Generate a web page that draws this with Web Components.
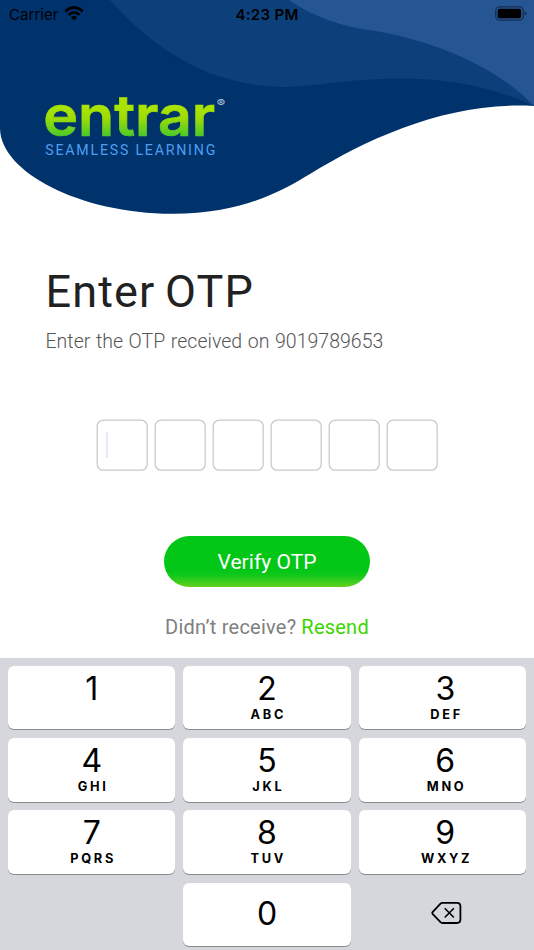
<!DOCTYPE html>
<html lang="en"><head><meta charset="utf-8"><title>Enter OTP</title>
<style>html,body{margin:0;background:#fff}body{width:534px;height:950px;overflow:hidden}</style></head>
<body><otp-screen></otp-screen>
<script>
const define = (name, html, setup) => customElements.define(name, class extends HTMLElement {
  connectedCallback() {
    if (this.shadowRoot) return;
    const t = document.createElement('template');
    t.innerHTML = html;
    this.attachShadow({ mode: 'open' }).append(t.content.cloneNode(true));
    if (setup) setup(this, this.shadowRoot);
  }
});

define('status-bar', `<style>
:host{display:grid;grid-template-columns:1fr auto 1fr;align-items:center;height:28px;padding:0 9px 0 9px;box-sizing:border-box;font:15px Inter,sans-serif;color:#000}
.l{display:flex;align-items:center;gap:5px;letter-spacing:.05px}
b{font-weight:600;letter-spacing:.3px}
.r{justify-self:end;display:flex;margin:-2px -2px 0 0}
svg{display:block}
.w{margin-top:-2px}
</style>
<div class="l"><span>Carrier</span><svg class="w" width="20" height="15" viewBox="0 0 20 15" fill="none" stroke="#000" stroke-width="2.7"><path d="M1.3 5.6Q10-2.7 18.7 5.6M4.6 8.9Q10 3.7 15.4 8.9"/><path d="M6.9 11.3Q10 8.7 13.1 11.3L10 14.4Z" fill="#000" stroke="none"/></svg></div>
<b>4:23 PM</b>
<div class="r"><svg width="32" height="15" viewBox="0 0 32 15"><rect x=".8" y=".9" width="27.4" height="13.2" rx="3.8" fill="none" stroke="#000" stroke-opacity=".45" stroke-width="1.3"/><rect x="2.7" y="2.8" width="23.4" height="9.4" rx="2" fill="#000"/><path d="M29.8 5.2Q31.5 6 31.5 7.5T29.8 9.8Z" fill="#000" opacity=".5"/></svg></div>`);

define('brand-logo', `<style>:host{display:block}svg{display:block;overflow:visible}</style>
<svg width="200" height="70" viewBox="0 0 200 70">
<defs><linearGradient id="g" gradientUnits="userSpaceOnUse" x1="0" y1="18" x2="0" y2="47"><stop offset="0" stop-color="#a9e400"/><stop offset=".35" stop-color="#9ddc06"/><stop offset="1" stop-color="#47c72c"/></linearGradient></defs>
<text x="3.2" y="46" font-family="Inter,sans-serif" font-weight="600" font-size="56.5" fill="url(#g)" stroke="url(#g)" stroke-width=".7" textLength="172" lengthAdjust="spacingAndGlyphs">entrar</text>
<text x="176.8" y="17" font-family="Inter,sans-serif" font-size="10.5" fill="#b7c9e4" textLength="8.4" lengthAdjust="spacingAndGlyphs">®</text>
<text x="5.3" y="65.1" font-family="Roboto,sans-serif" font-size="14.2" fill="#4e9ff0" textLength="170">SEAMLESS LEARNING</text>
</svg>`);

define('wave-header', `<style>
:host{display:grid;height:216px}
:host>*{grid-area:1/1}
svg{display:block}
.c{display:flex;flex-direction:column}
brand-logo{margin:62px 0 0 40px}
</style>
<svg width="534" height="216" viewBox="0 0 534 216">
<path fill="#00326c" d="M0 0H534V106C450 101 370 137 310 174C285 189 244 214 172 213.8C80 213.5 0 172 0 128Z"/>
<path fill="#0d3f7b" d="M110 0H534V106C470 77 410 75 340 82C320 84 303 87 284 87C205 86 150 45 110 0Z"/>
<path fill="#255593" d="M289 0H534V106C495 65 430 39 366 29.5C338 26 307 13 289 0Z"/>
</svg>
<div class="c"><status-bar></status-bar><brand-logo></brand-logo></div>`);

define('page-title', `<style>
:host{display:block;padding:49px 0 0 45.5px;font-family:Roboto,sans-serif}
h1{margin:0;font-weight:400;font-size:45px;line-height:54px;color:#212121;letter-spacing:1.1px;word-spacing:-2.4px;white-space:nowrap}
p{margin:10px 0 0;font-weight:300;font-size:19.5px;line-height:26px;color:#555;letter-spacing:.02px;word-spacing:.8px;white-space:nowrap}
</style><h1><slot name="title"></slot></h1><p><slot></slot></p>`);

define('otp-input', `<style>
:host{display:flex;justify-content:center;gap:6px;padding-top:64px}
svg{display:block}
</style>`, (el, root) => {
  for (let i = 0; i < 6; i++) {
    const box = document.createElement('div');
    box.innerHTML = '<svg width="52" height="52" viewBox="0 0 52 52"><rect x="1.2" y="1.2" width="50" height="50" rx="6" fill="#fff" stroke="#cacaca" stroke-width="1.3"/>' +
      (i ? '' : '<rect x="9.8" y="12.5" width="2.2" height="26.5" rx="1" fill="#e8eaff"/>') + '</svg>';
    root.append(box);
  }
});

define('primary-button', `<style>
:host{display:flex;justify-content:center;padding-top:64.5px}
button{width:206px;height:51.5px;border:0;border-radius:26px;padding:1px 0 0;background:linear-gradient(#02c717 0,#02c717 68%,#13c91b 78%,#62d01c 100%);color:#fff;font:400 21px Roboto,sans-serif;letter-spacing:.05px}
</style><button><slot></slot></button>`);

define('resend-line', `<style>
:host{display:flex;justify-content:center;gap:5px;padding-top:27px;font:400 20px/26px Roboto,sans-serif;color:#808080;letter-spacing:.23px;white-space:nowrap}
a{color:#3cd500}
</style><span><slot></slot></span><a><slot name="action"></slot></a>`);

define('pad-key', `<style>
:host{display:flex;flex-direction:column;align-items:center;height:63.4px;box-sizing:border-box;border-radius:6px;background:#fff;box-shadow:0 1px 0 #898a8d;font-family:Inter,sans-serif;color:#000}
:host([edge]){padding-left:6px}
.n{font-size:32px;line-height:38px;margin-top:4px;font-weight:400}
.s{font-size:12.8px;line-height:16px;font-weight:700;letter-spacing:2.7px;margin-right:-2.7px;margin-top:-1px}
:host([solo]) .n{margin-top:12px}
</style><span class="n"><slot></slot></span><span class="s"></span>`,
(el, root) => { root.querySelector('.s').textContent = el.getAttribute('letters') || ''; });

define('delete-key', `<style>:host{display:flex;align-items:center;justify-content:center;height:61px}svg{display:block;margin-left:9px}</style>
<svg width="32" height="24" viewBox="0 0 32 24" fill="none" stroke="#000" stroke-width="1.8" stroke-linecap="round" stroke-linejoin="round"><path d="M11.5 1.8H26Q29.4 1.8 29.4 5.2V18.6Q29.4 22 26 22H11.5Q10.3 22 9.5 21.2L1.8 13.1Q.8 12 1.8 10.9L9.5 2.6Q10.3 1.8 11.5 1.8Z"/><path stroke-width="1.6" d="M14.2 7.7L22.4 16M22.4 7.7L14.2 16"/></svg>`);

define('number-pad', `<style>
:host{display:grid;grid-template-columns:repeat(3,1fr);column-gap:7.8px;row-gap:8.8px;align-content:start;height:292px;box-sizing:border-box;padding:8px 8px 0;background:#d6d7dd}
</style><pad-key>1</pad-key><pad-key letters="ABC">2</pad-key><pad-key edge letters="DEF">3</pad-key>
<pad-key letters="GHI">4</pad-key><pad-key letters="JKL">5</pad-key><pad-key edge letters="MNO">6</pad-key>
<pad-key letters="PQRS">7</pad-key><pad-key letters="TUV">8</pad-key><pad-key edge letters="WXYZ">9</pad-key>
<span></span><pad-key solo>0</pad-key><delete-key></delete-key>`);

define('otp-screen', `<style>
:host{display:flex;flex-direction:column;width:534px;height:950px;background:#fff;overflow:hidden}
:host>*{flex:none}
number-pad{margin-top:auto}
</style><wave-header></wave-header>
<page-title><span slot="title">Enter OTP</span>Enter the OTP received on 9019789653</page-title>
<otp-input></otp-input><primary-button>Verify OTP</primary-button>
<resend-line>Didn’t receive?<span slot="action">Resend</span></resend-line>
<number-pad></number-pad>`);
</script></body></html>
